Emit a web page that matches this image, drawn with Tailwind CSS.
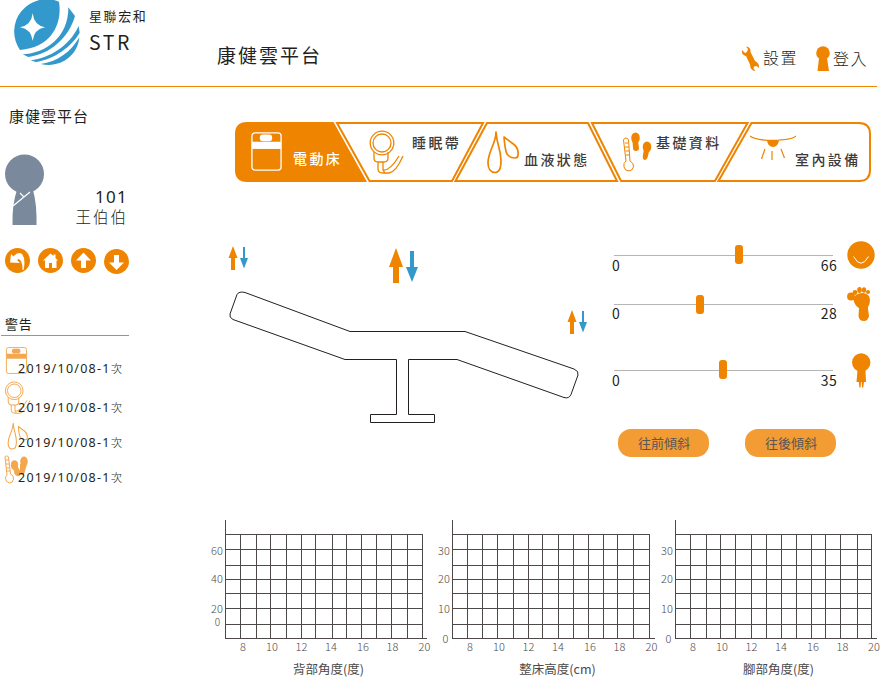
<!DOCTYPE html>
<html lang="zh-Hant">
<head>
<meta charset="utf-8">
<title>康健雲平台</title>
<script src="https://cdn.jsdelivr.net/npm/@tailwindcss/browser@4"></script>
</head>
<body class="w-[880px] h-[688px] overflow-hidden bg-white text-[#231f20] font-['Noto_Sans','Noto_Sans_CJK_TC',sans-serif]">
<svg class="hidden">
  <symbol id="bed" viewBox="0 0 30 38"><rect x=".8" y=".8" width="28.4" height="36.4" rx="3" fill="none" stroke="currentColor" stroke-width="1.3"/><path d="M1 9.500H29V16.500H1Z" fill="currentColor"/><rect x="8.500" y="2.500" width="12" height="6.500" rx="2.800" fill="currentColor"/></symbol>
  <symbol id="band" viewBox="0 0 36 44"><g fill="none" stroke="currentColor" stroke-width="1.3"><circle cx="13" cy="13" r="11.8"/><circle cx="13" cy="13" r="9"/><path d="M5 22V28Q5 32 9 32H15Q19 32 19 28V22M9 32V39Q9 43 14 43H20Q27 42 34 26M14 32V40Q21 41 30 26M14 40L16 43"/></g></symbol>
  <symbol id="drops" viewBox="0 0 33 44"><g fill="none" stroke="currentColor" stroke-width="1.7" stroke-linejoin="round"><path d="M9 2C9 14 1 21 1 33C1 39 4 42.500 8 42.500C12 42.500 14 38 14 31C14 19 10 16 9 2Z"/><path d="M17 7L27 14.500Q32 19 31 25Q31 28 28 28Q23 28 20 24Q18 20 17 7Z"/></g></symbol>
  <symbol id="thermo" viewBox="0 0 30 40"><g fill="none" stroke="currentColor" stroke-width="1"><path d="M1.500 8Q2 6 4 6Q6 6 6.500 8L8 29Q12 31 11.500 35Q10 39 7 39Q3 39 2 35Q1 31 4 29Z"/><path d="M3 11H6M3 15H7M3.500 19H7M4 23H7"/></g><g fill="currentColor"><ellipse cx="13.500" cy="6" rx="4.300" ry="5.500"/><path d="M10.500 9H16L17 16Q17 19 14 19Q11 19 11 16Z"/><ellipse cx="25" cy="15" rx="4.300" ry="5.500"/><path d="M22 17L27 19L26 24Q25 28 22.500 28Q20 27 21 23Z"/></g></symbol>
  <symbol id="arrows" viewBox="0 0 20 24"><path d="M5 0L9.500 12H7V24H3V12H.500Z" fill="#ee8400"/><path d="M15 1H17V12H20L16 22.500L12 12H15Z" fill="#3399cc"/></symbol>
</svg>

<header class="flex w-[877px] h-[87px] border-b border-[#ee8400] items-start">
  <svg class="ml-[14px] w-[67px] h-[66px] shrink-0" viewBox="42 0 201 198" fill="#3399cc">
    <path fill-rule="evenodd" d="M177 5C187 65 160 142 60 150A97 97 0 0 1 177 5ZM98 40Q102 76 135 82Q102 88 98 122Q94 88 60 82Q94 76 98 40Z"/>
    <path d="M205 22L225 48C207 113 150 163 85 171L68 163C138 160 206 111 205 22Z"/>
    <path d="M236 78L239 98C216 138 164 178 107 186L92 181C150 174 208 138 236 78Z"/>
    <path d="M238 112C234 165 183 206 122 192C172 185 212 157 238 112Z"/>
  </svg>
  <div class="ml-[8px] w-[128px]">
    <div class="mt-[6px] h-5 leading-5 text-[13px] tracking-[1.6px]">星聯宏和</div>
    <div class="mt-[4px] h-6 leading-6 text-[19.500px] tracking-[2.600px] font-['Noto_Sans_CJK_TC',sans-serif]">STR</div>
  </div>
  <h1 class="mt-[42px] w-[524px] leading-7 text-[19px] tracking-[2px]">康健雲平台</h1>
  <a class="flex mt-[46px] w-[75px] items-start">
    <svg class="w-[19px] h-[25px] shrink-0" viewBox="0 0 19 25"><path d="M1 4L4 7L6 6L7 3L5 .500Q10 1 9.500 6L14 15Q18.500 17 18 22L15.500 20L13 20.500L12.500 22.500L14.500 25Q9 25 9 18.500L5 10Q0 9 1 4Z" fill="#ee8400"/></svg>
    <span class="ml-[3px] leading-[24px] text-[16px] tracking-[1.5px] font-light whitespace-nowrap">設置</span>
  </a>
  <a class="flex mt-[46px] items-start">
    <svg class="w-[14px] h-[25px] shrink-0" viewBox="0 0 14 25" fill="#ee8400"><circle cx="7" cy="7" r="6.800"/><path d="M3 12H11L13 25H1.500Z"/></svg>
    <span class="ml-[3px] leading-[27px] text-[16px] tracking-[1.500px] font-light whitespace-nowrap">登入</span>
  </a>
</header>

<div class="flex h-[601px]">
  <aside class="w-[205px] shrink-0">
    <h2 class="pt-[17px] pl-[9px] h-[67px] leading-6 text-[15px] tracking-[1px]">康健雲平台</h2>
    <div class="flex h-[94px] pl-[5px]">
      <svg class="w-[40px] h-[71px] shrink-0" viewBox="0 0 40 71"><circle cx="19.500" cy="20" r="19.500" fill="#7b899c"/><path d="M12 36H28Q32 50 31.500 71H7.500Q7 50 12 36Z" fill="#7b899c"/><path d="M8 52L25 38M15 39L18.500 42.500" stroke="#fff" stroke-width="1.200" fill="none"/></svg>
      <div class="w-[83px] pt-[32px] text-right">
        <div class="h-[22px] leading-[22px] text-[17px] tracking-[1.300px]">101</div>
        <div class="h-[20px] leading-[18px] text-[15.500px] tracking-[2px] font-light">王伯伯</div>
      </div>
    </div>
    <div class="flex gap-[8px] pl-[5px] h-[67px] text-[#ee8400]">
      <svg class="w-[25px] h-[25px]" viewBox="0 0 25 25"><circle cx="12.500" cy="12.500" r="12.500" fill="currentColor"/><path d="M6 6L8.500 8.500Q13 3 17 6Q21 11 18.500 22H17.500Q17.500 12 13.500 11L12 12L15 15L5 14.500Z" fill="#fff"/></svg>
      <svg class="w-[25px] h-[25px]" viewBox="0 0 25 25"><circle cx="12.500" cy="12.500" r="12.500" fill="currentColor"/><path d="M12.500 5.500L15.500 8V6.500H17.500V10L20 12.500H18.500V20H14V15H11V20H7V12.500H5Z" fill="#fff"/></svg>
      <svg class="w-[25px] h-[25px]" viewBox="0 0 25 25"><circle cx="12.500" cy="12.500" r="12.500" fill="currentColor"/><path d="M12.500 4.500L20 12.500H15V20H10V12.500H5Z" fill="#fff"/></svg>
      <svg class="mt-[1px] w-[25px] h-[25px]" viewBox="0 0 25 25"><circle cx="12.500" cy="12.500" r="12.500" fill="currentColor"/><path d="M12.500 21L20 13.500H15V6H10V13.500H5Z" fill="#fff"/></svg>
    </div>
    <div class="ml-[1px] w-[128px] h-[21px] pl-[4px] border-b border-[#ee8400] text-[13px] leading-[19px] tracking-[.8px]">警告</div>
    <ul class="mt-[11px] text-[#f3a74e]">
      <li class="flex h-[34px]"><svg class="ml-[5px] w-[23px] h-[27px] shrink-0"><use href="#bed"/></svg><span class="-ml-[10px] pt-[12px] leading-5 text-[12.500px] tracking-[1.250px] text-[#231f20] whitespace-nowrap">2019/10/08-1<span class="text-[11.500px] tracking-normal font-light">次</span></span></li>
      <li class="flex h-[42px]"><svg class="ml-[4px] w-[28px] h-[33px] shrink-0"><use href="#band"/></svg><span class="-ml-[14px] pt-[17px] leading-5 text-[12.500px] tracking-[1.250px] text-[#231f20] whitespace-nowrap">2019/10/08-1<span class="text-[11.500px] tracking-normal font-light">次</span></span></li>
      <li class="flex h-[33px]"><svg class="ml-[7px] -mt-px w-[22px] h-[28px] shrink-0"><use href="#drops"/></svg><span class="-ml-[11px] pt-[10px] leading-5 text-[12.500px] tracking-[1.250px] text-[#231f20] whitespace-nowrap">2019/10/08-1<span class="text-[11.500px] tracking-normal font-light">次</span></span></li>
      <li class="flex h-[35px]"><svg class="ml-[4px] -mt-px w-[25px] h-[29px] shrink-0" viewBox="0 0 25 29"><path d="M1 2Q1 1 2.500 1Q4 1 4.500 2L6.500 19Q10 20 9.500 24Q9 28 5.500 28Q1.500 27 1.500 23.500Q1.500 21 3 20ZM2 5H5M2 9H5M2.500 13H5.500M3 16H6" fill="none" stroke="currentColor"/><g fill="currentColor"><ellipse cx="10.500" cy="10" rx="3.700" ry="4.800"/><path d="M8 12L13 10L17 18Q16 22 13 21Q10 20 10 16Z"/><ellipse cx="20" cy="6.500" rx="3.800" ry="5"/><path d="M16 9L23 9L20.500 18Q19 21 16.500 19.500Q14.500 18 16 14Z"/></g></svg><span class="-ml-[11px] pt-[12px] leading-5 text-[12.500px] tracking-[1.250px] text-[#231f20] whitespace-nowrap">2019/10/08-1<span class="text-[11.500px] tracking-normal font-light">次</span></span></li>
    </ul>
  </aside>

  <main class="w-[675px] shrink-0">
    <nav class="relative mt-[35px] ml-[30px] w-[636px] h-[60px] text-[#ee8400]">
      <svg class="absolute inset-0 w-[636px] h-[60px]" viewBox="235 122 636 60"><path d="M247 122H333.500L367 182H247Q235 182 235 170V134Q235 122 247 122Z" fill="#ee8400"/><g fill="none" stroke="#ee8400" stroke-width="2"><path d="M337 123H483L452 181H369.500Z"/><path d="M487 123H588L617 181H455.500Z"/><path d="M592 123H747.500L715 181H621Z"/><path d="M751.500 123H859Q870 123 870 134V170Q870 181 859 181H718.500Z"/></g></svg>
      <div class="relative flex h-full text-[14px] leading-5 tracking-[2.400px] font-medium text-[#3e3a39] whitespace-nowrap">
        <a class="flex w-[133px] text-white"><svg class="mt-[10px] ml-[16px] w-[31px] h-[39px]"><use href="#bed" class="text-white"/></svg><span class="mt-[27px] ml-[11px]">電動床</span></a>
        <a class="flex w-[118px]"><svg class="mt-[8px] ml-[1px] w-[36px] h-[44px] text-[#ee8400]"><use href="#band"/></svg><span class="mt-[11px] ml-[7px]">睡眠帶</span></a>
        <a class="flex w-[135px]"><svg class="mt-[8px] ml-[1px] w-[33px] h-[44px] text-[#ee8400]"><use href="#drops"/></svg><span class="mt-[28px] ml-[4px]">血液狀態</span></a>
        <a class="flex w-[128px]"><svg class="mt-[10px] ml-[1px] w-[30px] h-[40px] text-[#ee8400]"><use href="#thermo"/></svg><span class="mt-[11px] ml-[4px]">基礎資料</span></a>
        <a class="flex"><svg class="mt-[13px] ml-px w-[46px] h-[26px] text-[#ee8400]" viewBox="0 0 46 26"><path d="M0 1Q4 5 23 5.500Q42 5 46 1" fill="none" stroke="currentColor" stroke-width="1.300"/><path d="M17 5.500H29Q28 12 23 12Q18 12 17 5.500Z" fill="currentColor"/><path d="M15 14L11.500 24M22 16V25M31 14L34.500 23" stroke="currentColor" stroke-width="1.200"/></svg><span class="mt-[28px] -ml-px">室內設備</span></a>
      </div>
    </nav>

    <section class="flex h-[338px]">
      <svg class="w-[395px] h-[338px] shrink-0" viewBox="205 182 395 338">
        <use href="#arrows" x="228" y="246" width="20" height="24"/>
        <use href="#arrows" x="567" y="310" width="20" height="24"/>
        <path d="M396 248L403 267H399V283H393V267H389Z" fill="#ee8400"/><path d="M410 251H414V267H418L412 282L406 267H410Z" fill="#3399cc"/>
        <g fill="none" stroke="#231f20" stroke-width="1"><path d="M396.500 359.500H345L233 319.500Q229 317.500 230 314L237 294.500Q239 291 245 292.500L350 331.500H465L574 369Q579 371 578 375L571 394.500Q569 399 564 397.500L457 359.500H408.500V414.500H434.500V422.500H370.500V414.500H396.500V359.500"/></g>
      </svg>
      <div class="w-[275px] font-['Noto_Sans_CJK_TC',sans-serif] text-[14px] leading-5 tracking-[.3px]">
        <div class="flex mt-[59px] h-[45px]">
          <div class="ml-[12px] w-[225px]"><div class="relative mt-[14px] ml-[2px] w-[219px] h-px bg-[#b5b5b6]"><i class="absolute left-[121px] -top-[10px] w-[8px] h-[19px] rounded-[3px] bg-[#ee8400]"></i></div><div class="flex -mt-px justify-between"><span>0</span><span>66</span></div></div>
          <svg class="ml-[10px] mt-0 w-[28px] h-[28px]" viewBox="0 0 28 28"><circle cx="14" cy="14" r="13.700" fill="#ee8400"/><path d="M6.500 15.500Q14 29 21.500 15.500" stroke="#fff" fill="none"/></svg>
        </div>
        <div class="flex h-[67px]">
          <div class="ml-[12px] w-[225px]"><div class="relative mt-[18px] ml-[2px] w-[219px] h-px bg-[#b5b5b6]"><i class="absolute left-[82px] -top-[9px] w-[8px] h-[19px] rounded-[3px] bg-[#ee8400]"></i></div><div class="flex -mt-[2px] justify-between"><span>0</span><span>28</span></div></div>
          <svg class="ml-[10px] w-[25px] h-[36px]" viewBox="0 0 25 36" fill="#ee8400"><circle cx="4" cy="10.500" r="3.900"/><circle cx="8" cy="6.500" r="2.400"/><ellipse cx="12.500" cy="4" rx="2.300" ry="3"/><ellipse cx="17" cy="4" rx="2.200" ry="2.800"/><circle cx="21" cy="6" r="2"/><path d="M7 11Q10 7 16 7Q23 8 23 14Q23 18 21 21Q21 25 22 30Q21 35 17 35Q12 35 11.500 30L12 22Q8 20 6.500 14L4 13Z"/></svg>
        </div>
        <div class="flex h-[76px]">
          <div class="ml-[12px] w-[225px]"><div class="relative mt-[17px] ml-[2px] w-[219px] h-px bg-[#b5b5b6]"><i class="absolute left-[105px] -top-[10px] w-[8px] h-[19px] rounded-[3px] bg-[#ee8400]"></i></div><div class="flex -mt-px justify-between"><span>0</span><span>35</span></div></div>
          <svg class="ml-[15px] w-[19px] h-[35px]" viewBox="0 0 19 35" fill="#ee8400"><circle cx="9.200" cy="9.500" r="9.200"/><path d="M5.500 17H13.500L14 29H12L11.200 34.500H10L9.700 29H9L8.600 34.500H7.400L6.800 29H4.500Z"/></svg>
        </div>
        <div class="flex gap-[36px] pl-[18px] text-[13px] tracking-normal text-[#595757]">
          <button class="w-[91px] h-[28px] pl-px rounded-[13px] bg-[#f29c33]">往前傾斜</button>
          <button class="w-[91px] h-[28px] pl-px rounded-[13px] bg-[#f29c33]">往後傾斜</button>
        </div>
      </div>
    </section>

    <section class="h-[168px]">
      <svg class="w-[675px] h-[168px]" viewBox="205 520 675 168">
        <g fill="none" stroke="#4c4948" stroke-width="1" shape-rendering="crispEdges">
          <path d="M225.500 520V639M225 638.500H427M225 534.500H423M225 549.500H423M225 565.500H423M225 579.500H423M225 593.500H423M225 608.500H423M225 624.500H423M240.500 534V638M256.500 534V638M270.500 534V638M286.500 534V638M301.500 534V638M315.500 534V638M332.500 534V638M346.500 534V638M361.500 534V638M376.500 534V638M391.500 534V638M407.500 534V638M422.500 534V638"/>
          <path d="M452.500 520V639M452 638.500H655M452 534.500H650M452 549.500H650M452 565.500H650M452 579.500H650M452 593.500H650M452 608.500H650M452 624.500H650M467.500 534V638M482.500 534V638M497.500 534V638M513.500 534V638M528.500 534V638M542.500 534V638M558.500 534V638M573.500 534V638M588.500 534V638M603.500 534V638M617.500 534V638M633.500 534V638M649.500 534V638"/>
          <path d="M675.500 520V639M675 638.500H877M675 534.500H872M675 549.500H872M675 565.500H872M675 579.500H872M675 593.500H872M675 608.500H872M675 624.500H872M690.500 534V638M706.500 534V638M720.500 534V638M735.500 534V638M751.500 534V638M766.500 534V638M781.500 534V638M796.500 534V638M811.500 534V638M825.500 534V638M840.500 534V638M857.500 534V638M871.500 534V638"/>
        </g>
        <g class="font-['Noto_Sans_CJK_TC',sans-serif] font-light" font-size="11" fill="#4c4948" text-anchor="middle">
          <text x="243" y="651">8</text><text x="272" y="651">10</text><text x="301.500" y="651">12</text><text x="331" y="651">14</text><text x="363" y="651">16</text><text x="392.500" y="651">18</text><text x="424.500" y="651">20</text>
          <text x="470" y="651">8</text><text x="499" y="651">10</text><text x="528.500" y="651">12</text><text x="558" y="651">14</text><text x="590" y="651">16</text><text x="619.500" y="651">18</text><text x="651.500" y="651">20</text>
          <text x="693" y="651">8</text><text x="722" y="651">10</text><text x="751.500" y="651">12</text><text x="781" y="651">14</text><text x="813" y="651">16</text><text x="842.500" y="651">18</text><text x="874" y="651">20</text>
          <text x="217" y="555">60</text><text x="217" y="583">40</text><text x="217" y="613">20</text><text x="217.500" y="626" font-size="10">0</text>
          <text x="444" y="555">30</text><text x="444" y="583">20</text><text x="444" y="613">10</text><text x="445.500" y="643">0</text>
          <text x="667" y="555">30</text><text x="667" y="583">20</text><text x="667" y="613">10</text><text x="668.500" y="643">0</text>
        </g>
        <g class="font-['Noto_Sans_CJK_TC',sans-serif]" font-size="12.500" fill="#4c4948" text-anchor="middle">
          <text x="328.500" y="674">背部角度(度)</text><text x="557.500" y="674">整床高度(cm)</text><text x="778.500" y="674">腳部角度(度)</text>
        </g>
      </svg>
    </section>
  </main>
</div>
</body>
</html>
